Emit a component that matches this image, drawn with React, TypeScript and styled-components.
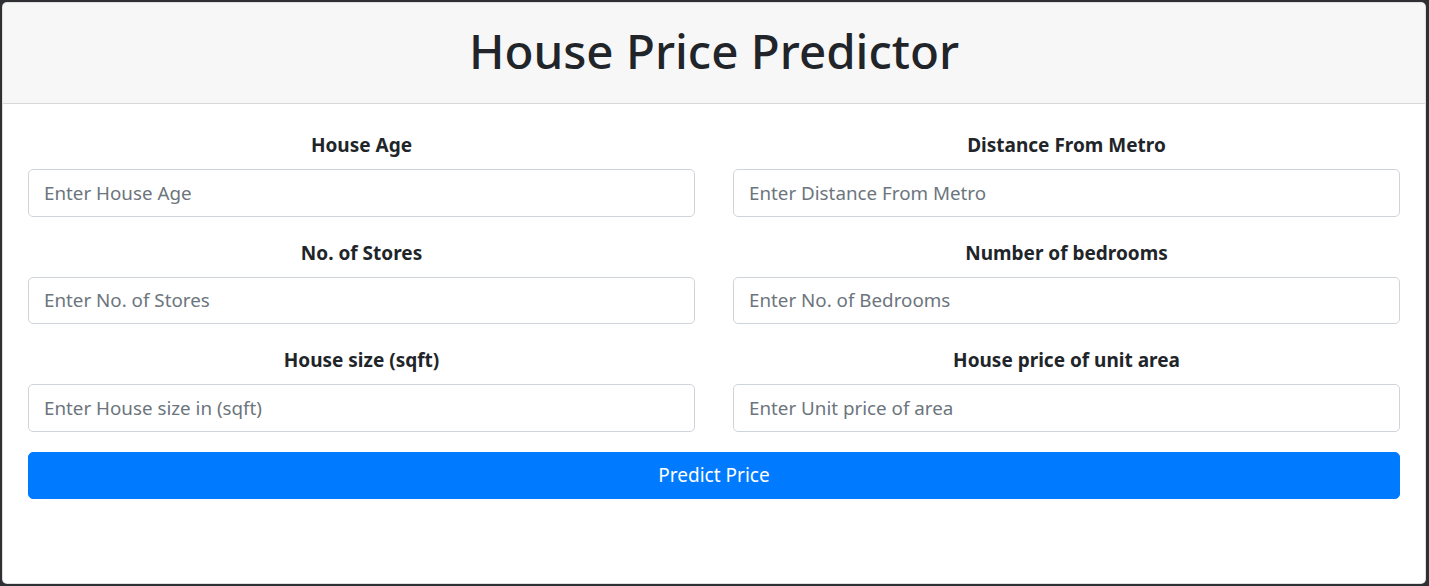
import styled, { createGlobalStyle } from 'styled-components';

const GlobalStyle = createGlobalStyle`
  html, body {
    margin: 0;
    padding: 0;
    background: #2f3034;
  }
  * {
    box-sizing: border-box;
  }
`;

const fields = [
  { label: 'House Age', placeholder: 'Enter House Age' },
  { label: 'Distance From Metro', placeholder: 'Enter Distance From Metro' },
  { label: 'No. of Stores', placeholder: 'Enter No. of Stores' },
  { label: 'Number of bedrooms', placeholder: 'Enter No. of Bedrooms' },
  { label: 'House size (sqft)', placeholder: 'Enter House size in (sqft)' },
  { label: 'House price of unit area', placeholder: 'Enter Unit price of area' },
];

export default function App() {
  return (
    <>
      <GlobalStyle />
      <Frame>
        <Card>
          <Header>
            <Title>House Price Predictor</Title>
          </Header>
          <Body>
            <Grid>
              {fields.map((f) => (
                <Group key={f.label}>
                  <Label>{f.label}</Label>
                  <Input type="text" placeholder={f.placeholder} />
                </Group>
              ))}
            </Grid>
            <Button type="button">Predict Price</Button>
          </Body>
        </Card>
      </Frame>
    </>
  );
}

const Frame = styled.div`
  padding: 2px 3px 2px 2px;
  height: 100vh;
`;

const Card = styled.div`
  height: 100%;
  background: #fff;
  border: 1px solid rgba(0, 0, 0, 0.125);
  border-radius: 5px;
  overflow: hidden;
  font-family: 'Noto Sans', 'Open Sans', sans-serif;
  color: #212529;
`;

const Header = styled.div`
  background: #f7f7f7;
  border-bottom: 1px solid rgba(0, 0, 0, 0.125);
  height: 101px;
  padding-bottom: 5px;
  display: flex;
  align-items: center;
  justify-content: center;
`;

const Title = styled.h1`
  margin: 0;
  font-size: 47.5px;
  font-weight: 500;
  line-height: 1.2;
`;

const Body = styled.div`
  padding: 25px 25px;
`;

const Grid = styled.div`
  display: grid;
  grid-template-columns: 1fr 1fr;
  column-gap: 38px;
`;

const Group = styled.div`
  display: flex;
  flex-direction: column;
  margin-bottom: 20px;
`;

const Label = styled.label`
  text-align: center;
  font-weight: 700;
  font-size: 19px;
  line-height: 30px;
  margin-bottom: 9px;
  padding-top: 1px;
`;

const Input = styled.input`
  height: 47.5px;
  padding: 7px 15px;
  font-size: 18.8px;
  font-family: inherit;
  color: #495057;
  border: 1px solid #ced4da;
  border-radius: 5px;
  background: #fff;
  outline: none;
  &::placeholder {
    color: #6c757d;
  }
`;

const Button = styled.button`
  display: block;
  width: 100%;
  height: 47px;
  background: #007bff;
  color: #fff;
  border: 1px solid #007bff;
  border-radius: 5px;
  font-size: 19px;
  font-family: inherit;
  cursor: pointer;
`;
